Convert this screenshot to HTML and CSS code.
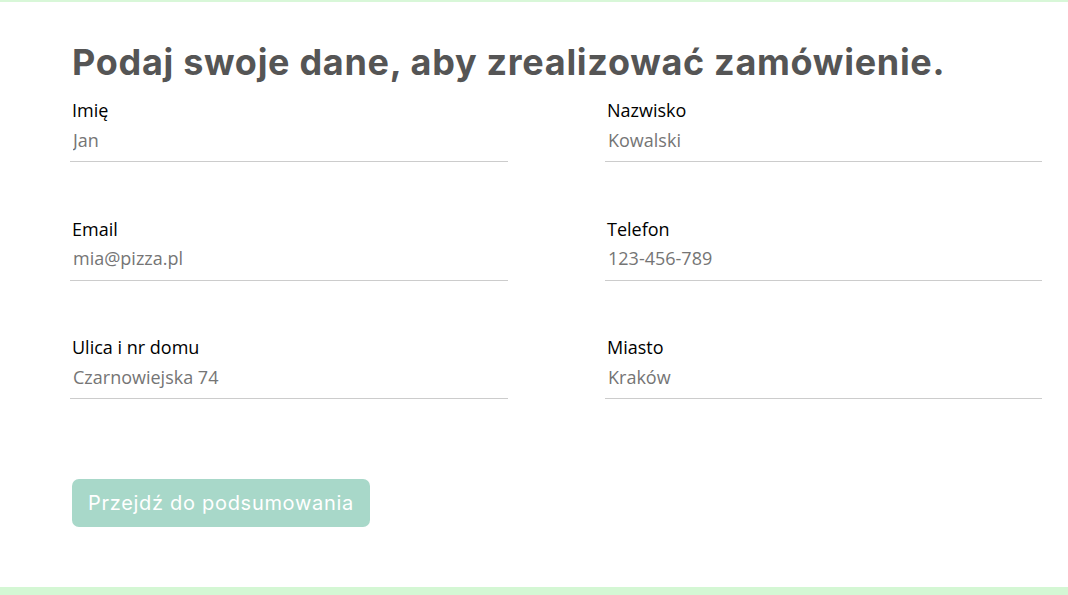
FILE: index.html
```html
<!DOCTYPE html>
<html lang="pl">
<head>
<meta charset="utf-8">
<title>Dane zamówienia</title>
<link rel="stylesheet" href="styles.css">
</head>
<body>
<div class="top-line"></div>
<main class="order">
  <h1 class="title">Podaj swoje dane, aby zrealizować zamówienie.</h1>
  <form class="form">
    <div class="grid">
      <label class="field">
        <span class="label">Imię</span>
        <input class="input" type="text" placeholder="Jan">
      </label>
      <label class="field">
        <span class="label">Nazwisko</span>
        <input class="input" type="text" placeholder="Kowalski">
      </label>
      <label class="field">
        <span class="label">Email</span>
        <input class="input" type="email" placeholder="mia@pizza.pl">
      </label>
      <label class="field">
        <span class="label">Telefon</span>
        <input class="input" type="tel" placeholder="123-456-789">
      </label>
      <label class="field">
        <span class="label">Ulica i nr domu</span>
        <input class="input" type="text" placeholder="Czarnowiejska 74">
      </label>
      <label class="field">
        <span class="label">Miasto</span>
        <input class="input" type="text" placeholder="Kraków">
      </label>
    </div>
    <button class="submit" type="button">Przejdź do podsumowania</button>
  </form>
</main>
<div class="bottom-bar"></div>
</body>
</html>
```
FILE: styles.css
```css
* { box-sizing: border-box; }
html, body { margin: 0; padding: 0; background: #fff; }
body {
  width: 1068px;
  height: 595px;
  display: flex;
  flex-direction: column;
  overflow: hidden;
}
.top-line {
  height: 2px;
  background: #d8f7d8;
}
.order {
  flex: 1;
  padding: 38px 26px 0 70px;
}
.title {
  margin: 0 0 0 2px;
  font-family: Inter, "Liberation Sans", sans-serif;
  font-weight: 700;
  font-size: 36px;
  line-height: 44px;
  color: #555555;
  letter-spacing: 0.7px;
}
.form { margin-top: 14px; }
.grid {
  display: grid;
  grid-template-columns: 438px 437px;
  column-gap: 97px;
  row-gap: 54.5px;
}
.field {
  display: flex;
  flex-direction: column;
}
.label {
  padding-left: 2px;
  font-family: "Open Sans", "Noto Sans", sans-serif;
  font-size: 18px;
  line-height: 24px;
  color: #000;
}
.input {
  height: 40px;
  border: 0;
  border-bottom: 1px solid #cccccc;
  padding: 4px 3px 8px;
  font-family: "Open Sans", "Noto Sans", sans-serif;
  font-size: 18px;
  color: #333;
  background: transparent;
  outline: none;
}
.input::placeholder { color: #757575; }
.submit {
  margin: 80px 0 0 2px;
  height: 48px;
  padding: 0 16px;
  border: 0;
  border-radius: 7px;
  background: #a8d8c9;
  color: #fff;
  font-family: Inter, "Liberation Sans", sans-serif;
  font-size: 20px;
  font-weight: 400;
  letter-spacing: 0.7px;
}
.bottom-bar {
  height: 8px;
  background: #d4f7d4;
}
```
